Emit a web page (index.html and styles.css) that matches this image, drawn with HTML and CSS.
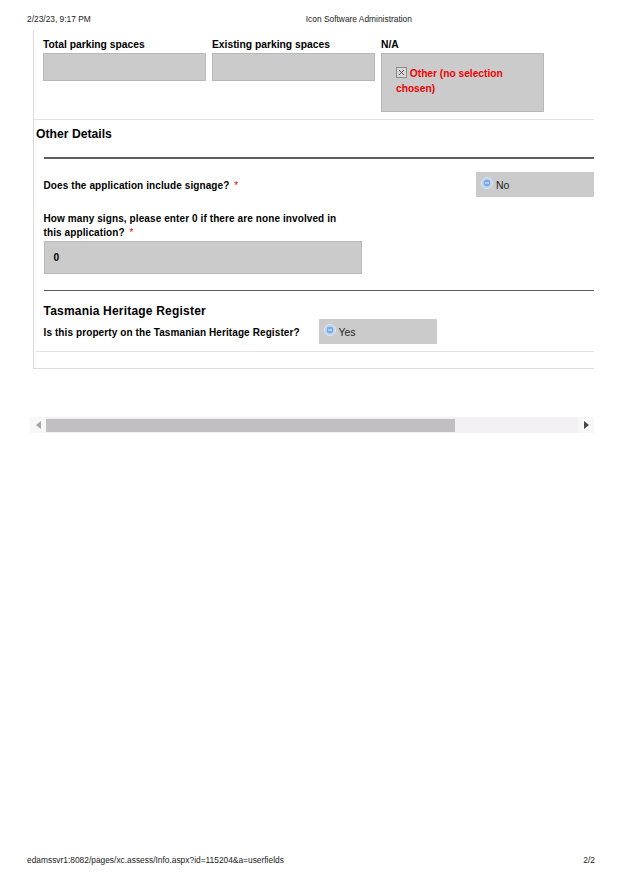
FILE: index.html
```html
<!DOCTYPE html>
<html>
<head>
  <meta charset="UTF-8">
  <title>Icon Software Administration</title>
  <link rel="stylesheet" href="styles.css">
</head>
<body>
  <div class="print-header">
    <span class="print-date">2/23/23, 9:17 PM</span>
    <span class="print-title">Icon Software Administration</span>
  </div>

  <div class="panel">
    <div class="parking-row">
      <div class="field">
        <label>Total parking spaces</label>
        <div class="box box-parking"></div>
      </div>
      <div class="field">
        <label>Existing parking spaces</label>
        <div class="box box-parking"></div>
      </div>
      <div class="field">
        <label>N/A</label>
        <div class="box box-na">
          <svg class="check-icon" width="11" height="11" viewBox="0 0 11 11">
            <rect x="0.5" y="0.5" width="10" height="10" fill="#d8d8d8" stroke="#8c8c8c"/>
            <path d="M3 3l5 5M8 3l-5 5" stroke="#555" stroke-width="1" fill="none"/>
          </svg>
          Other (no selection chosen)
        </div>
      </div>
    </div>

    <h2 class="details-title">Other Details</h2>

    <div class="details">
      <div class="signage-row">
        <span class="question">Does the application include signage? <span class="req">*</span></span>
        <div class="box box-radio">
          <svg class="radio-icon" width="12" height="12" viewBox="0 0 12 12">
            <circle cx="6" cy="6" r="5.5" fill="#b4d3f3" stroke="#dce8f5"/>
            <circle cx="6" cy="6" r="3.2" fill="#7fa9dc"/>
            <rect x="4" y="5.5" width="4" height="1" fill="#e8f0fa"/>
          </svg>
          No
        </div>
      </div>

      <div class="signs-block">
        <div class="question signs-question">How many signs, please enter 0 if there are none involved in this application? <span class="req">*</span></div>
        <div class="box box-signs">0</div>
      </div>

      <h3 class="heritage-title">Tasmania Heritage Register</h3>
      <div class="heritage-row">
        <span class="question">Is this property on the Tasmanian Heritage Register?</span>
        <div class="box box-radio">
          <svg class="radio-icon" width="12" height="12" viewBox="0 0 12 12">
            <circle cx="6" cy="6" r="5.5" fill="#b4d3f3" stroke="#dce8f5"/>
            <circle cx="6" cy="6" r="3.2" fill="#7fa9dc"/>
            <rect x="4" y="5.5" width="4" height="1" fill="#e8f0fa"/>
          </svg>
          Yes
        </div>
      </div>
    </div>
    <div class="panel-end"></div>
  </div>

  <div class="scrollbar">
    <div class="scroll-btn"><span class="arrow-left"></span></div>
    <div class="scroll-thumb"></div>
    <div class="scroll-track"></div>
    <div class="scroll-btn"><span class="arrow-right"></span></div>
  </div>

  <div class="print-footer">
    <span>edamssvr1:8082/pages/xc.assess/Info.aspx?id=115204&amp;a=userfields</span>
    <span>2/2</span>
  </div>
</body>
</html>
```

FILE: styles.css
```css
html, body {
  margin: 0;
  padding: 0;
}
body {
  width: 622px;
  height: 880px;
  display: flex;
  flex-direction: column;
  overflow: hidden;
  background-color: #fff;
  font-family: "Liberation Sans", Arial, sans-serif;
  color: #000;
}
.print-header {
  display: flex;
  height: 30px;
  padding: 14px 0 0 27px;
  box-sizing: border-box;
  font-size: 8.4px;
  line-height: 11px;
  color: #222;
}
.print-title {
  margin-left: 215px;
}
.panel {
  width: 561px;
  margin-left: 33px;
  border-left: 1px solid #ddd;
  border-bottom: 1px solid #ddd;
  box-sizing: border-box;
  overflow: hidden;
}
.parking-row {
  display: flex;
  gap: 6px;
  height: 90px;
  padding: 7px 0 0 9px;
  box-sizing: border-box;
  border-bottom: 1px solid #e4e4e4;
}
.field label {
  display: block;
  margin-bottom: 1px;
  font-size: 10.3px;
  font-weight: bold;
  line-height: 15px;
}
.box {
  background-color: #cbcbcb;
  border: 1px solid #b8b8b8;
  box-sizing: border-box;
}
.box-parking {
  width: 163px;
  height: 28px;
}
.box-na {
  width: 163px;
  height: 59px;
  padding: 12px 14px 0;
  font-size: 10.2px;
  font-weight: bold;
  line-height: 15px;
  color: #f00000;
}
.check-icon {
  vertical-align: -1px;
}
.details-title {
  margin: 6px 0 0 2px;
  font-size: 12.2px;
  line-height: 16px;
}
.details {
  margin-left: 9.5px;
}
.signage-row {
  display: flex;
  justify-content: space-between;
  align-items: center;
  border-top: 2px solid #5c5c5c;
  margin-top: 15px;
  padding-top: 13px;
}
.question {
  font-size: 10px;
  font-weight: bold;
  line-height: 14px;
  letter-spacing: 0.1px;
}
.signage-row .question, .heritage-row .question {
  margin-top: 2px;
}
.req {
  color: #f00000;
  font-weight: normal;
  margin-left: 2px;
}
.box-radio {
  width: 118px;
  height: 25px;
  padding-left: 5px;
  border: none;
  font-size: 10.5px;
  line-height: 26px;
  color: #222;
}
.radio-icon {
  vertical-align: 0;
}
.signs-block {
  margin-top: 15px;
  padding-bottom: 16px;
  border-bottom: 1px solid #5c5c5c;
}
.signs-question {
  width: 310px;
}
.box-signs {
  width: 318.5px;
  height: 33px;
  margin-top: 1px;
  padding-left: 9px;
  font-size: 10.2px;
  font-weight: bold;
  line-height: 31px;
}
.heritage-title {
  margin: 13px 0 0;
  font-size: 12px;
  line-height: 15px;
  letter-spacing: 0.2px;
}
.heritage-row {
  display: flex;
  align-items: center;
  gap: 19px;
}
.panel-end {
  height: 16px;
  border-top: 1px solid #e4e4e4;
  margin: 7px 0 0 2px;
}
.scrollbar {
  display: flex;
  width: 564px;
  height: 16px;
  margin: 48px 0 0 30px;
  background-color: #f4f1f5;
}
.scroll-btn {
  width: 16px;
  display: flex;
  align-items: center;
  justify-content: center;
  background-color: #f7f7f7;
}
.scroll-thumb {
  width: 409px;
  margin: 2px 0 1px;
  background-color: #c2bfc3;
}
.scroll-track {
  flex: 1;
}
.arrow-left {
  border-style: solid;
  border-width: 4px 5px 4px 0;
  border-color: transparent #a3a3a3 transparent transparent;
}
.arrow-right {
  border-style: solid;
  border-width: 4px 0 4px 5px;
  border-color: transparent transparent transparent #444;
}
.print-footer {
  display: flex;
  justify-content: space-between;
  margin-top: auto;
  padding: 0 27px 14px;
  font-size: 8.4px;
  line-height: 11px;
  color: #222;
}
```
